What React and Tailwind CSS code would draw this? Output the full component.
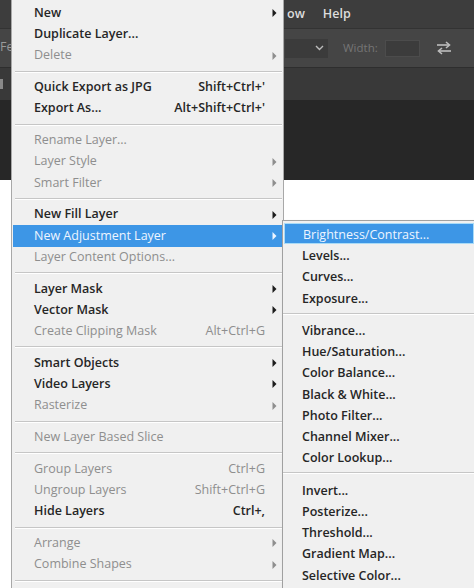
import React from "react";

const mainItems = [
  { label: "New", arrow: true },
  { label: "Duplicate Layer..." },
  { label: "Delete", disabled: true, arrow: true },
  { sep: true },
  { label: "Quick Export as JPG", shortcut: "Shift+Ctrl+'" },
  { label: "Export As...", shortcut: "Alt+Shift+Ctrl+'" },
  { sep: true },
  { label: "Rename Layer...", disabled: true },
  { label: "Layer Style", disabled: true, arrow: true },
  { label: "Smart Filter", disabled: true, arrow: true },
  { sep: true },
  { label: "New Fill Layer", arrow: true },
  { label: "New Adjustment Layer", arrow: true, active: true },
  { label: "Layer Content Options...", disabled: true },
  { sep: true },
  { label: "Layer Mask", arrow: true },
  { label: "Vector Mask", arrow: true },
  { label: "Create Clipping Mask", disabled: true, shortcut: "Alt+Ctrl+G" },
  { sep: true },
  { label: "Smart Objects", arrow: true },
  { label: "Video Layers", arrow: true },
  { label: "Rasterize", disabled: true, arrow: true },
  { sep: true },
  { label: "New Layer Based Slice", disabled: true },
  { sep: true },
  { label: "Group Layers", disabled: true, shortcut: "Ctrl+G" },
  { label: "Ungroup Layers", disabled: true, shortcut: "Shift+Ctrl+G" },
  { label: "Hide Layers", shortcut: "Ctrl+," },
  { sep: true },
  { label: "Arrange", disabled: true, arrow: true },
  { label: "Combine Shapes", disabled: true, arrow: true },
  { sep: true },
  { label: "", disabled: true },
];

const subItems = [
  { label: "Brightness/Contrast...", active: true },
  { label: "Levels..." },
  { label: "Curves..." },
  { label: "Exposure..." },
  { sep: true },
  { label: "Vibrance..." },
  { label: "Hue/Saturation..." },
  { label: "Color Balance..." },
  { label: "Black & White..." },
  { label: "Photo Filter..." },
  { label: "Channel Mixer..." },
  { label: "Color Lookup..." },
  { sep: true },
  { label: "Invert..." },
  { label: "Posterize..." },
  { label: "Threshold..." },
  { label: "Gradient Map..." },
  { label: "Selective Color..." },
];

function Arrow({ color }) {
  return (
    <svg width="5" height="8" viewBox="0 0 5 8">
      <path d="M0.5 0 L4.5 4 L0.5 8 Z" fill={color} />
    </svg>
  );
}

function Separator({ full, tall }) {
  return (
    <div
      className={
        "flex flex-col justify-center " +
        (tall ? "h-[11px] " : "h-[10.5px] ") +
        (full ? "" : "ml-[3px] mr-[1px]")
      }
    >
      <div className="border-t border-[#c6c6c6]" />
      <div className="border-t border-white" />
    </div>
  );
}

function MainRow({ item }) {
  const text = item.active
    ? "text-[#eef5ff]"
    : item.disabled
    ? "text-[#8e8e8e]"
    : "text-[#262626] font-semibold";
  const arrowColor = item.active ? "#eef5ff" : item.disabled ? "#8e8e8e" : "#1c1c1c";
  return (
    <div
      className={
        "h-[21.25px] flex items-center pl-[21px] mx-[1px] " +
        (item.active ? "bg-[#3d96e6]" : "") +
        " " +
        text
      }
    >
      <span className="flex-1 whitespace-nowrap">{item.label}</span>
      {item.shortcut && <span className="whitespace-nowrap">{item.shortcut}</span>}
      <span className="w-[17px] pl-[7px] flex items-center">
        {item.arrow && <Arrow color={arrowColor} />}
      </span>
    </div>
  );
}

function SubRow({ item }) {
  return (
    <div
      className={
        "h-[21.25px] flex items-center pl-[18px] pt-[3px] mx-[1px] whitespace-nowrap " +
        (item.active
          ? "bg-[#3d96e6] text-[#eef5ff] border border-[#a9dbf7]"
          : "text-[#262626] font-semibold")
      }
    >
      {item.label}
    </div>
  );
}

function SwapIcon() {
  return (
    <svg width="16" height="16" viewBox="0 0 16 16" fill="none" stroke="#bdbdbd" strokeWidth="1.6">
      <path d="M1 5 H13" />
      <path d="M10 2 L13.5 5 L10 8" />
      <path d="M15 11 H3" />
      <path d="M6 8 L2.5 11 L6 14" />
    </svg>
  );
}

export default function App() {
  return (
    <div
      className="relative w-[474px] h-[588px] overflow-hidden bg-white text-[12.5px]"
      style={{ fontFamily: '"Open Sans", "Noto Sans", sans-serif' }}
    >
      {/* photoshop chrome behind the menus */}
      <div className="h-[28px] bg-[#3d3d3d] flex items-center pl-[287px] gap-[18px] text-[#dcdcdc] font-semibold">
        <span>ow</span>
        <span>Help</span>
      </div>
      <div className="h-[39px] bg-[#454545] border-t border-[#333] flex items-center pl-[285px] relative">
        <span className="absolute left-0 top-[9px] text-[#9a9a9a]">Fe</span>
        <div className="w-[43px] h-[19px] bg-[#3b3b3b] flex items-center justify-end pr-[4px]">
          <svg width="9" height="6" viewBox="0 0 9 6" fill="none" stroke="#bcbcbc" strokeWidth="1.4">
            <path d="M1 1 L4.5 4.5 L8 1" />
          </svg>
        </div>
        <span className="ml-[15px] text-[#757575] text-[11.5px]">Width:</span>
        <div className="ml-[7px] w-[35px] h-[17px] bg-[#3c3c3c] border border-[#4c4c4c]" />
        <div className="ml-[16px] flex items-center">
          <SwapIcon />
        </div>
      </div>
      <div className="h-[33px] bg-[#393939] border-t border-[#2e2e2e] flex items-center">
        <div className="w-[3px] h-[10px] bg-[#8a8a8a]" />
      </div>
      <div className="h-[80px] bg-[#272727]" />

      {/* main menu */}
      <div className="absolute left-[11px] top-0 w-[273px] h-[600px] bg-[#f0f0f0] border-l border-r border-[#a8a8a8] pt-[2.5px]">
        {mainItems.map((item, i) =>
          item.sep ? <Separator key={i} /> : <MainRow key={i} item={item} />
        )}
      </div>

      {/* adjustment submenu */}
      <div className="absolute left-[282px] top-[220px] w-[194px] h-[380px] bg-[#f0f0f0] border border-[#a0a0a0] pt-[2px] shadow-[2px_2px_3px_rgba(0,0,0,0.2)]">
        {subItems.map((item, i) =>
          item.sep ? <Separator key={i} full tall /> : <SubRow key={i} item={item} />
        )}
      </div>
    </div>
  );
}
